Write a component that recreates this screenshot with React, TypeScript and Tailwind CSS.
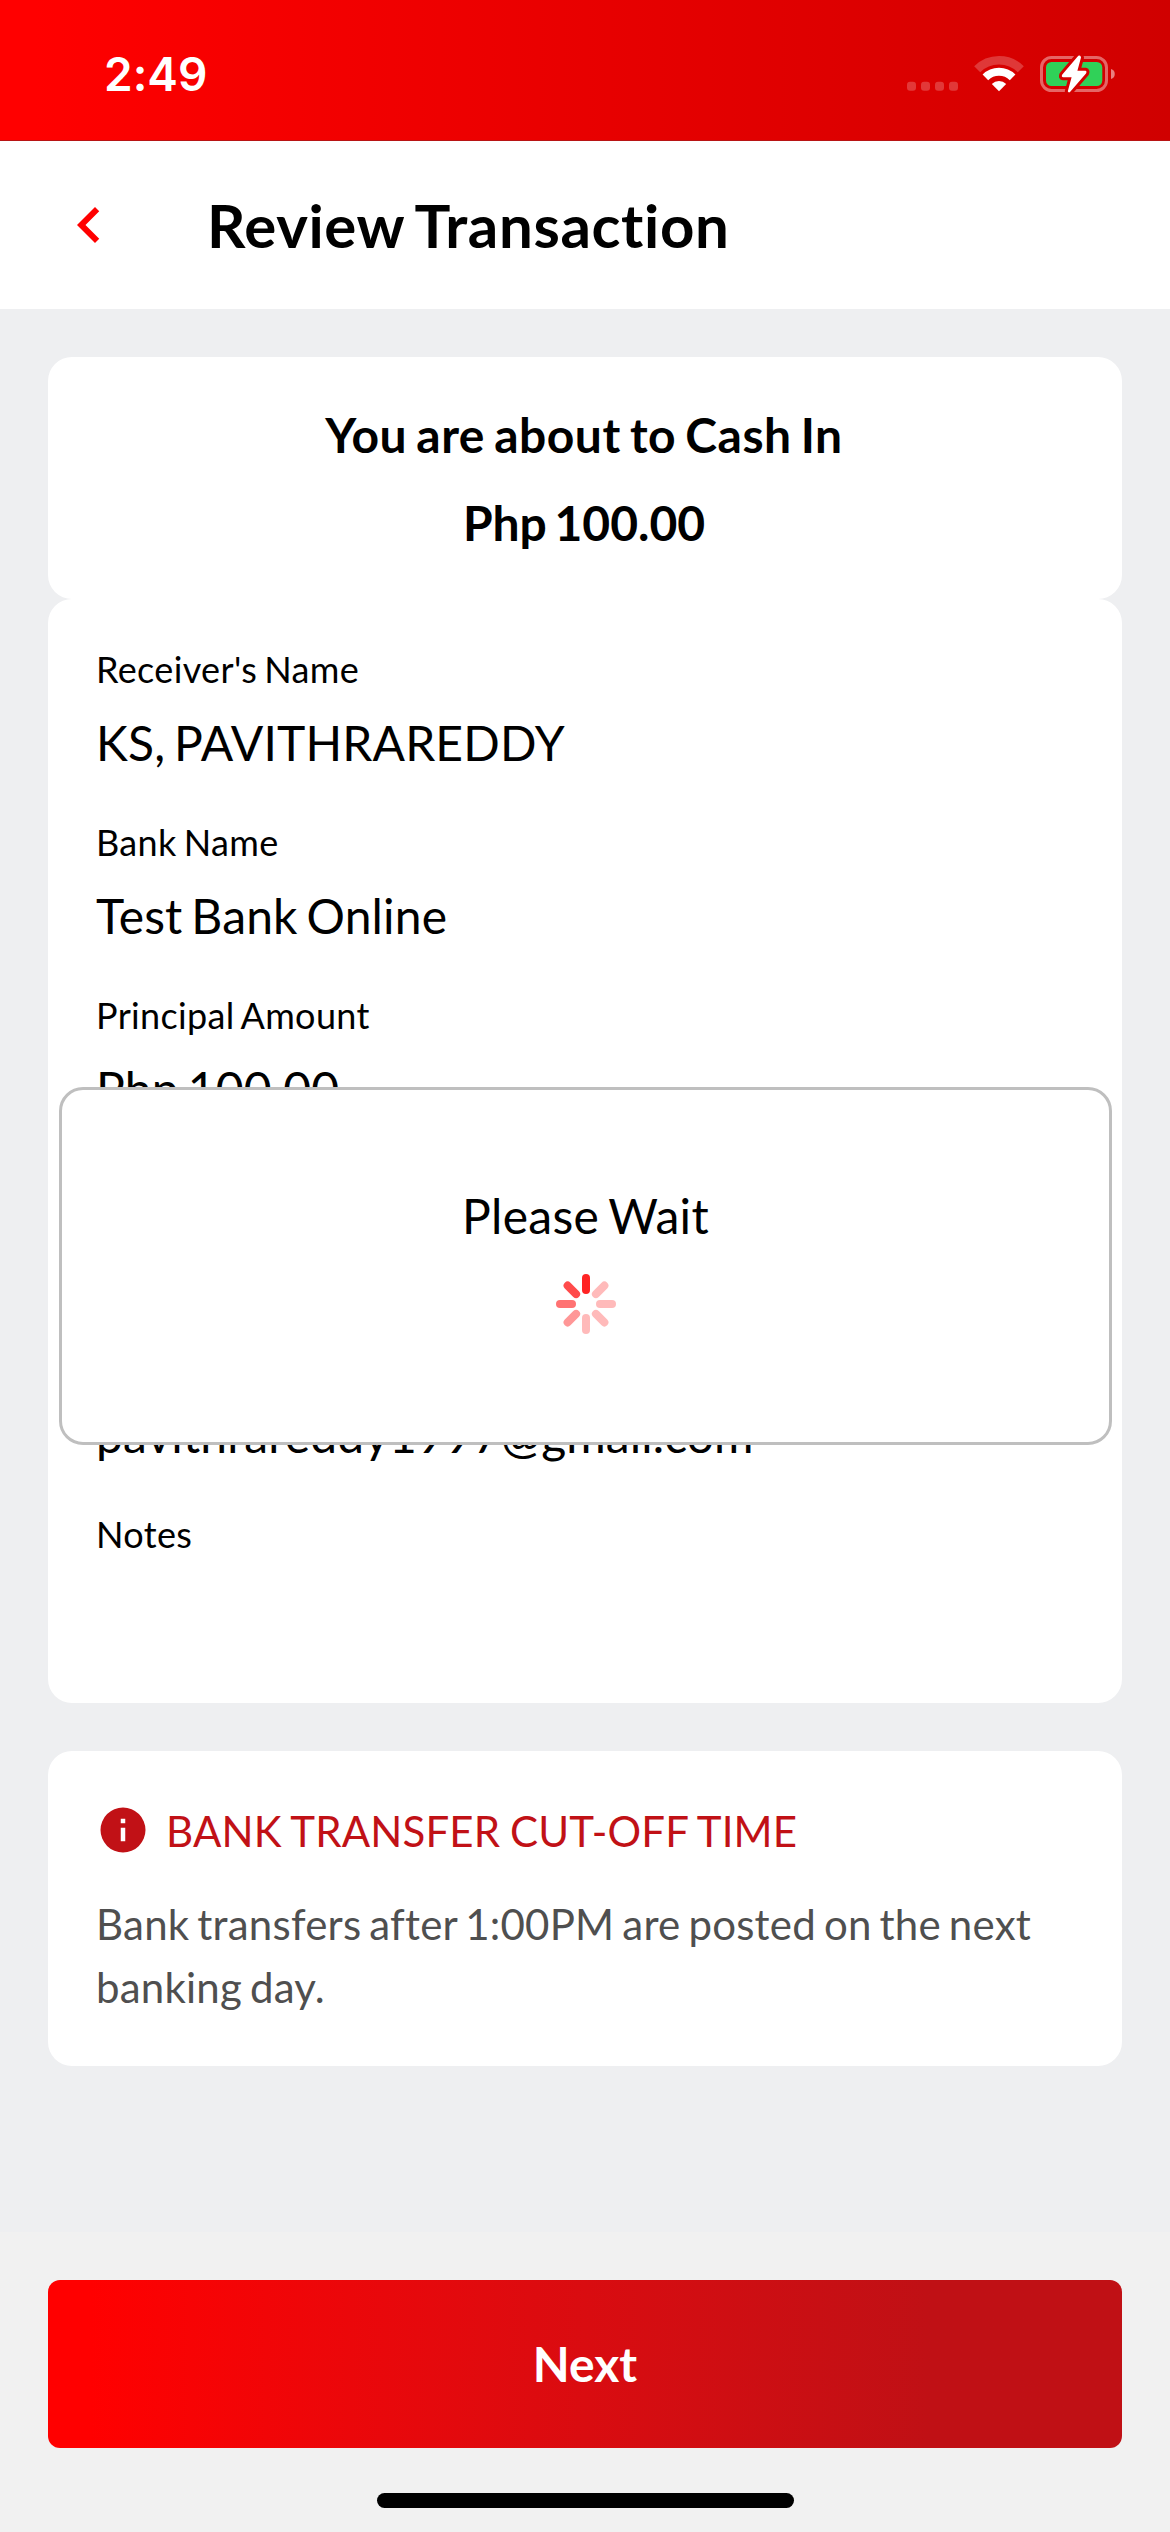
import React from "react";

function StatusIcons() {
  return (
    <svg className="block h-[48px] w-[216px]" viewBox="904 50 216 48" aria-hidden="true">
      <g fill="#fff" fillOpacity="0.22">
        <rect x="907" y="81.8" width="9" height="9" rx="3" />
        <rect x="921" y="81.8" width="9" height="9" rx="3" />
        <rect x="935" y="81.8" width="9" height="9" rx="3" />
        <rect x="949" y="81.8" width="9" height="9" rx="3" />
      </g>
      <g strokeWidth="8" fill="none" stroke="#fff">
        <path d="M977.2 69.2A31 31 0 0 1 1020.8 69.2" strokeOpacity="0.22" strokeWidth="8.6" />
        <path d="M985.4 77.4A19.3 19.3 0 0 1 1012.6 77.4" />
      </g>
      <path d="M999 91.2L991.8 84A10.4 10.4 0 0 1 1006.2 84Z" fill="#fff" />
      <rect x="1041.5" y="57.5" width="65" height="33" rx="10" fill="none" stroke="#fff" strokeOpacity="0.4" strokeWidth="3" />
      <rect x="1046" y="62" width="56.3" height="24" rx="5.5" fill="#30d158" />
      <path d="M1111 69A5.2 5.2 0 0 1 1111 79Z" fill="#fff" fillOpacity="0.5" />
      <path
        d="M1078.3 55.8L1062.3 74.6Q1061 77 1063.2 77.3H1071.6L1067.8 91.3Q1068.6 93.2 1070 92L1086 73.6Q1087.2 71.2 1085.4 70.8H1077.4L1081 57.6Q1080.6 54.6 1078.3 55.8Z"
        fill="#fff"
        stroke="#d40000"
        strokeWidth="6"
        strokeLinejoin="round"
        paintOrder="stroke"
      />
    </svg>
  );
}

function StatusBar() {
  return (
    <div className="flex h-[141px] shrink-0 justify-between border-b border-[#b81414] bg-linear-to-r from-[#ff0000] from-3% to-[#d00000]">
      <span className="ml-[104px] mt-[46px] font-[Inter] text-[46px] font-semibold leading-[56px] text-white">
        2:49
      </span>
      <div className="mr-[50px] mt-[50px]">
        <StatusIcons />
      </div>
    </div>
  );
}

function Header() {
  return (
    <header className="flex h-[168px] shrink-0 items-center bg-white pl-[53px]">
      <svg className="h-[72px] w-[72px]" viewBox="0 0 24 24" fill="#ff0000" aria-label="Back">
        <path d="M15.41 16.58L10.83 12L15.41 7.41L14 6L8 12L14 18Z" />
      </svg>
      <h1 className="ml-[82px] text-[60px] font-bold leading-[72px] tracking-[0.65px] [word-spacing:-3px]">
        Review Transaction
      </h1>
    </header>
  );
}

function Field({ label, value }: { label: string; value?: string }) {
  return (
    <div className="h-[173px]">
      <div className="text-[36px] leading-[44px] tracking-[0.35px] [word-spacing:-2.5px]">{label}</div>
      <div className="mt-[23px] text-[48px] leading-[58px] tracking-[0.15px] [word-spacing:-3.5px]">{value}</div>
    </div>
  );
}

const petals = [
  { angle: 0, color: "#ff2424" },
  { angle: 45, color: "#ffbaba" },
  { angle: 90, color: "#ffbaba" },
  { angle: 135, color: "#ffbaba" },
  { angle: 180, color: "#ffbaba" },
  { angle: 225, color: "#ff9797" },
  { angle: 270, color: "#ff7272" },
  { angle: 315, color: "#ff4b4b" },
];

function Spinner() {
  return (
    <svg className="h-[60px] w-[60px]" viewBox="-30 -30 60 60" aria-hidden="true">
      {petals.map((p) => (
        <rect key={p.angle} x="-4" y="-30" width="8" height="20" rx="4" fill={p.color} transform={`rotate(${p.angle})`} />
      ))}
    </svg>
  );
}

function WaitDialog() {
  return (
    <div
      role="dialog"
      className="absolute left-[59px] top-[1087px] flex h-[358px] w-[1053px] flex-col items-center rounded-[24px] border-[3px] border-[#bfbfbf] bg-white pt-[97px]"
    >
      <p className="text-[48px] leading-[58px] tracking-[0.3px] [word-spacing:-3px]">Please Wait</p>
      <div className="ml-px mt-[29px]">
        <Spinner />
      </div>
    </div>
  );
}

export default function App() {
  return (
    <div className="relative flex h-[2532px] w-[1170px] flex-col overflow-hidden bg-[#eeeff1] font-[Lato,sans-serif] text-black [font-variant-ligatures:none]">
      <StatusBar />
      <Header />
      <main className="flex-1 px-12 pt-12">
        <section className="h-[242px] rounded-[24px] bg-white pr-0.5 pt-[49px] text-center text-[48px] font-bold leading-[58px]">
          <p className="tracking-[0.5px] [word-spacing:-3px]">You are about to Cash In</p>
          <p className="mt-[30px] [word-spacing:-4px]">Php 100.00</p>
        </section>
        <section className="h-[1104px] rounded-[24px] bg-white px-12 pt-12">
          <Field label="Receiver's Name" value="KS, PAVITHRAREDDY" />
          <Field label="Bank Name" value="Test Bank Online" />
          <Field label="Principal Amount" value="Php 100.00" />
          <div className="mt-[240px] h-[106px] text-[48px] leading-[58px] tracking-[0.1px]">
            pavithrareddy1997@gmail.com
          </div>
          <Field label="Notes" />
        </section>
        <section className="mt-12 h-[315px] rounded-[24px] bg-white px-12 pt-[52px]">
          <div className="flex items-center">
            <svg className="h-[54px] w-[54px]" viewBox="0 0 24 24" fill="#c11116" aria-hidden="true">
              <path d="M13 9h-2V7h2m0 10h-2v-6h2m-1-9A10 10 0 0 0 2 12a10 10 0 0 0 10 10a10 10 0 0 0 10-10A10 10 0 0 0 12 2Z" />
            </svg>
            <h2 className="ml-4 mt-[2px] text-[42px] leading-[50px] tracking-[0.15px] text-[#c11116] [word-spacing:-1px]">
              BANK TRANSFER CUT-OFF TIME
            </h2>
          </div>
          <p className="mt-[36px] text-[42px] leading-[63px] tracking-[0.22px] text-[#4f4f4f] [word-spacing:-3px]">
            Bank transfers after 1:00PM are posted on the next banking day.
          </p>
        </section>
      </main>
      <footer className="flex h-[300px] shrink-0 flex-col items-center bg-[#f1f1f1] px-12 pt-12">
        <button className="h-[168px] w-full rounded-[12px] bg-linear-to-r from-[#ff0000] from-4% to-[#c01015] to-82% text-[48px] font-bold text-white">
          Next
        </button>
        <div className="mt-[45px] h-[15px] w-[417px] rounded-full bg-black" />
      </footer>
      <WaitDialog />
    </div>
  );
}
